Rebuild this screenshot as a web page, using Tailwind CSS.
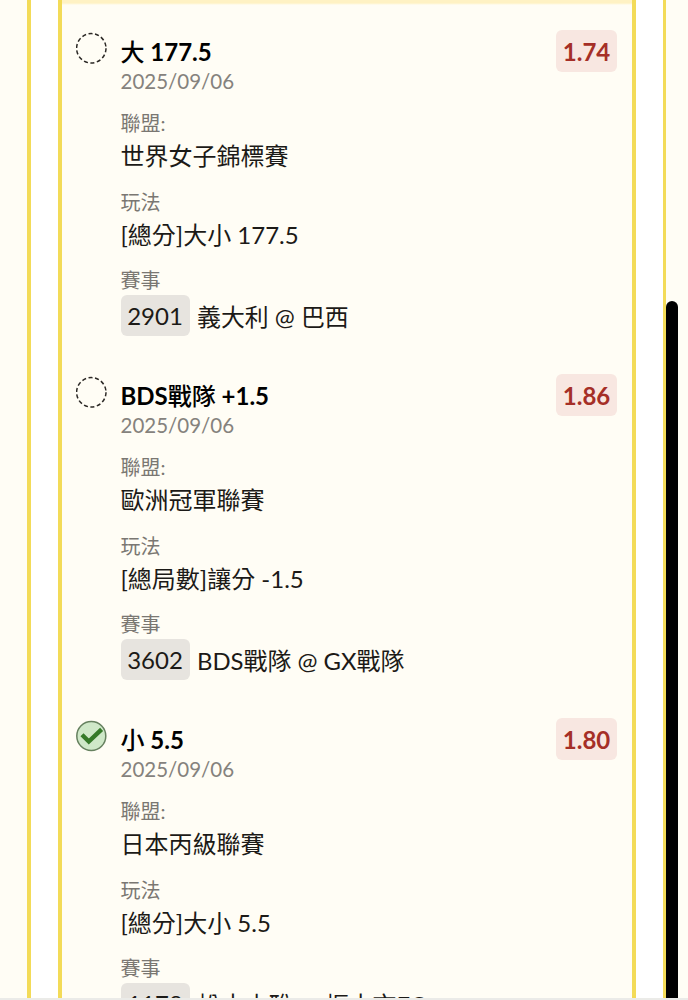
<!DOCTYPE html>
<html lang="zh-Hant">
<head>
  <meta charset="UTF-8">
  <meta name="viewport" content="width=device-width, initial-scale=1.0">
  <title>賽事明細</title>
  <script src="https://cdn.jsdelivr.net/npm/@tailwindcss/browser@4"></script>
</head>
<body class="relative h-[1000px] overflow-hidden bg-[#fffdf5] font-[Lato,'Noto_Sans_CJK_TC',sans-serif] text-[#1c1a17]">
  <div class="ml-[27px] h-[998px] w-[639px] overflow-hidden border-r-3 border-l-4 border-[#f3db58] bg-white px-[27px]">
    <div class="h-full overflow-hidden border-x-4 border-[#f3db58] bg-[#fffdf5]">
      <div class="h-[5px] bg-gradient-to-b from-[#fff2c4] from-60% to-[#fffdf5]"></div>

      <div class="flex flex-col gap-[38px] pt-[25px] pr-[15px] pl-[14px]">
        <!-- 大 177.5 -->
        <div class="flex h-[306px] items-start">
          <svg class="mt-[2px] h-8 w-8 shrink-0" viewBox="0 0 32 32" fill="none">
            <circle cx="15.3" cy="16.3" r="14.7" stroke="#2b2825" stroke-width="1.5" stroke-dasharray="4.1 2.5" />
          </svg>
          <div class="ml-[12.5px] flex-1">
            <div class="h-[30px] translate-y-[7px] text-[24px] leading-[30px] font-bold text-black"><span class="font-medium">大</span> 177.5</div>
            <div class="mt-[6px] h-[31px] text-[20.5px] leading-[30px] text-[#85827d]">2025/09/06</div>
            <div class="mt-[11px] h-[30px] text-[20px] leading-[30px] text-[#7a7772]">聯盟:</div>
            <div class="h-[38px] text-[24px] leading-[36px]">世界女子錦標賽</div>
            <div class="mt-[11px] h-[30px] text-[20px] leading-[30px] text-[#7a7772]">玩法</div>
            <div class="h-[38px] text-[24px] leading-[36px]">[總分]大小 177.5</div>
            <div class="mt-[11px] h-[29px] text-[20px] leading-[29px] text-[#7a7772]">賽事</div>
            <div class="flex h-[41px] items-center text-[24px] leading-[41px]">
              <span class="mr-[7.5px] h-[41px] w-[69px] rounded-md bg-[#e7e4df] text-center">2901</span>
              <span class="pt-[2px] text-[23.9px]">義大利 @ 巴西</span>
            </div>
          </div>
          <div class="h-[42px] w-[61px] rounded-md bg-[#f8e7e1] text-center text-[24px] leading-[43px] font-bold text-[#a52f27]">1.74</div>
        </div>

        <!-- BDS戰隊 +1.5 -->
        <div class="flex h-[306px] items-start">
          <svg class="mt-[2px] h-8 w-8 shrink-0" viewBox="0 0 32 32" fill="none">
            <circle cx="15.3" cy="16.3" r="14.7" stroke="#2b2825" stroke-width="1.5" stroke-dasharray="4.1 2.5" />
          </svg>
          <div class="ml-[12.5px] flex-1">
            <div class="h-[30px] translate-y-[7px] text-[24px] leading-[30px] font-bold text-black">BDS<span class="font-medium">戰隊</span> +1.5</div>
            <div class="mt-[6px] h-[31px] text-[20.5px] leading-[30px] text-[#85827d]">2025/09/06</div>
            <div class="mt-[11px] h-[30px] text-[20px] leading-[30px] text-[#7a7772]">聯盟:</div>
            <div class="h-[38px] text-[24px] leading-[36px]">歐洲冠軍聯賽</div>
            <div class="mt-[11px] h-[30px] text-[20px] leading-[30px] text-[#7a7772]">玩法</div>
            <div class="h-[38px] text-[24px] leading-[36px]">[總局數]讓分 -1.5</div>
            <div class="mt-[11px] h-[29px] text-[20px] leading-[29px] text-[#7a7772]">賽事</div>
            <div class="flex h-[41px] items-center text-[24px] leading-[41px]">
              <span class="mr-[7.5px] h-[41px] w-[69px] rounded-md bg-[#e7e4df] text-center">3602</span>
              <span class="pt-[2px] text-[23.9px]">BDS戰隊 @ GX戰隊</span>
            </div>
          </div>
          <div class="h-[42px] w-[61px] rounded-md bg-[#f8e7e1] text-center text-[24px] leading-[43px] font-bold text-[#a52f27]">1.86</div>
        </div>

        <!-- 小 5.5 -->
        <div class="flex h-[306px] items-start">
          <svg class="mt-[2px] h-8 w-8 shrink-0" viewBox="0 0 32 32" fill="none">
            <circle cx="15.3" cy="16" r="14.5" fill="#cfe8c8" stroke="#66815f" stroke-width="1.5" />
            <path d="M6 14.8 L12.8 21.5 L25.6 9.3" stroke="#367a29" stroke-width="4.4" />
          </svg>
          <div class="ml-[12.5px] flex-1">
            <div class="h-[30px] translate-y-[7px] text-[24px] leading-[30px] font-bold text-black"><span class="font-medium">小</span> 5.5</div>
            <div class="mt-[6px] h-[31px] text-[20.5px] leading-[30px] text-[#85827d]">2025/09/06</div>
            <div class="mt-[11px] h-[30px] text-[20px] leading-[30px] text-[#7a7772]">聯盟:</div>
            <div class="h-[38px] text-[24px] leading-[36px]">日本丙級聯賽</div>
            <div class="mt-[11px] h-[30px] text-[20px] leading-[30px] text-[#7a7772]">玩法</div>
            <div class="h-[38px] text-[24px] leading-[36px]">[總分]大小 5.5</div>
            <div class="mt-[11px] h-[29px] text-[20px] leading-[29px] text-[#7a7772]">賽事</div>
            <div class="flex h-[41px] items-center text-[24px] leading-[41px]">
              <span class="mr-[7.5px] h-[41px] w-[69px] rounded-md bg-[#e7e4df] text-center">1178</span>
              <span class="pt-[2px] text-[23.9px]">松本山雅 @ 栃木市FC</span>
            </div>
          </div>
          <div class="h-[42px] w-[61px] rounded-md bg-[#f8e7e1] text-center text-[24px] leading-[43px] font-bold text-[#a52f27]">1.80</div>
        </div>
      </div>
    </div>
  </div>
  <div class="h-[2px] bg-[#ebebe8]"></div>

  <!-- scrollbar -->
  <div class="absolute top-[301px] left-[666px] h-[697px] w-3 rounded-t-full bg-black"></div>
</body>
</html>
